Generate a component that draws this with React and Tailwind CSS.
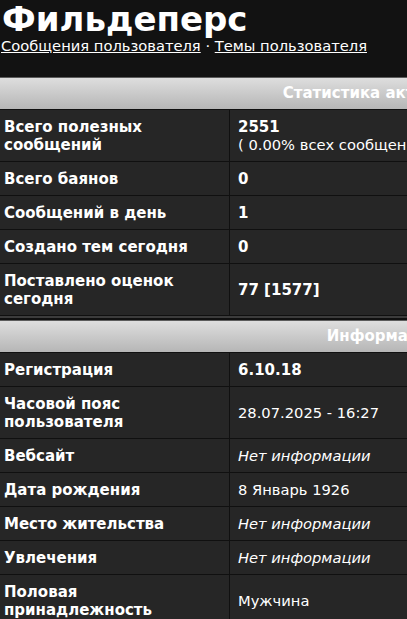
import React from 'react';

const stats = [
  { label: 'Всего полезных сообщений', value: (<><b className="text-[15px]">2551</b><br />( 0.00% всех сообщений / 0.35 сообщений в день )</>) },
  { label: 'Всего баянов', value: <b className="text-[15px]">0</b> },
  { label: 'Сообщений в день', value: <b className="text-[15px]">1</b> },
  { label: 'Создано тем сегодня', value: <b className="text-[15px]">0</b> },
  { label: 'Поставлено оценок сегодня', value: <b className="text-[15px]">77 [1577]</b> },
];

const info = [
  { label: 'Регистрация', value: <b className="text-[15px]">6.10.18</b> },
  { label: 'Часовой пояс пользователя', value: '28.07.2025 - 16:27' },
  { label: 'Вебсайт', value: <i>Нет информации</i> },
  { label: 'Дата рождения', value: '8 Январь 1926' },
  { label: 'Место жительства', value: <i>Нет информации</i> },
  { label: 'Увлечения', value: <i>Нет информации</i> },
  { label: 'Половая принадлежность', value: 'Мужчина' },
];

function Section({ title, rows }) {
  return (
    <div className="w-[766px] border-t border-[#5c5c5c]">
      <div className="h-[32px] flex items-center justify-center bg-gradient-to-b from-[#dedede] to-[#b6b6b6] border-b border-[#101010] text-white font-bold text-[15px]">
        {title}
      </div>
      {rows.map((r) => (
        <div key={r.label} className="grid grid-cols-[230px_1fr] bg-[#262626] border-b border-[#101010] text-[14.7px] leading-[18px] text-white">
          <div className="border-r border-[#101010] pt-[8px] pb-[7px] pl-[4px] pr-2 font-bold text-[15px] flex items-center">
            <span className="max-w-[200px]">{r.label}</span>
          </div>
          <div className="pt-[8px] pb-[7px] pl-[8px] flex items-center whitespace-nowrap">
            <div>{r.value}</div>
          </div>
        </div>
      ))}
    </div>
  );
}

export default function App() {
  return (
    <div className="min-h-screen w-full overflow-hidden bg-[#121212] text-white" style={{ fontFamily: '"DejaVu Sans", Verdana, sans-serif' }}>
      <h1 className="pl-[2px] pt-[2px] text-[34px] leading-[35px] font-bold">Фильдеперс</h1>
      <div className="pl-[1px] text-[14.7px] leading-[18px] whitespace-nowrap">
        <a href="#" className="underline">Сообщения пользователя</a>
        {' · '}
        <a href="#" className="underline">Темы пользователя</a>
      </div>
      <div className="h-[22px]" />
      <Section title="Статистика активности" rows={stats} />
      <div className="h-[2px] bg-[#3c3c3c]" />
      <div className="h-[2px] bg-[#101010]" />
      <Section title="Информация" rows={info} />
    </div>
  );
}
